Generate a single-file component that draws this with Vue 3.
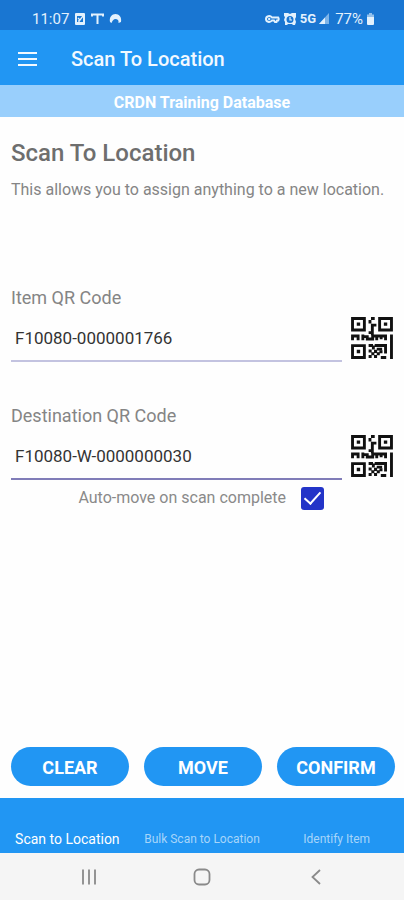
<script setup>
import { ref } from 'vue'

const itemCode = ref('F10080-0000001766')
const destinationCode = ref('F10080-W-0000000030')
const autoMove = ref(true)
const activeTab = ref('Scan to Location')
const tabs = ['Scan to Location', 'Bulk Scan to Location', 'Identify Item']

function clearCodes() {
  itemCode.value = ''
  destinationCode.value = ''
}
</script>

<template>
  <div class="screen">
    <svg class="defs" width="0" height="0" aria-hidden="true">
      <symbol id="qr" viewBox="0 0 124 124">
        <g fill="none" stroke="currentColor" stroke-width="8.5">
          <path d="M4.500 4.500h35v34h-35zM84.500 4.500h35v34h-35zM4.500 84.500h35v35h-35z" />
          <path d="M56 19V9M59 4.500h11M75 24H63v22H52M63 44v10" />
          <path d="M4.500 69V56H21v13M35 52v17M35 58h13v7h16v-9h8M76 69V56h26v13M89 56v10M119.500 52v72" />
          <path d="M52 84h13M70 84h32v24M66 84v12M76 95h16M88 119.500h16" />
        </g>
        <path fill="currentColor" d="M17 16h10v10H17zM97 16h10v10H97zM17 97h10v10H17zM52 96h9v9h-9zM60 104h9v9h-9zM52 112h9v9h-9zM68 97h9v9h-9zM76 104h9v9h-9zM68 112h9v9h-9zM84 98h9v9h-9z" />
      </symbol>
    </svg>

    <header>
      <div class="status">
        <div class="status-group">
          <span>11:07</span>
          <svg width="12" height="14" viewBox="0 0 12 14" aria-hidden="true">
            <path fill="currentColor" fill-rule="evenodd" d="M2 1h8q1 0 1 1v10q0 1-1 1H2q-1 0-1-1V2q0-1 1-1zM3 4v6h6V4z" />
            <path fill="none" stroke="currentColor" stroke-width="1.3" d="M4 6l2 2 3-4M4 9h2" />
          </svg>
          <svg width="13" height="14" viewBox="0 0 13 14" aria-hidden="true">
            <path fill="none" stroke="currentColor" stroke-width="2" d="M1 4.500V2.500h11v2M6.500 2.500V12" />
          </svg>
          <svg width="13" height="14" viewBox="0 0 13 14" aria-hidden="true">
            <path fill="currentColor" d="M1 10C0 5 3 2 6.500 2S13 5 12 10l-2.500 1C10 8 8.500 7 6.500 7S4 8 2.500 11z" />
          </svg>
        </div>
        <div class="status-group right">
          <svg width="15" height="14" viewBox="0 0 15 14" aria-hidden="true">
            <path fill="none" stroke="currentColor" stroke-width="2" d="M7 5.500C5 3 1 4 1 7s4 4 6 1.500h2l1 1.500h1.500l.5-1.500h1.200q1-1.500 0-3z" />
            <circle cx="4.200" cy="7" r="1.200" fill="currentColor" />
          </svg>
          <svg width="14" height="14" viewBox="0 0 14 14" aria-hidden="true">
            <path fill="currentColor" fill-rule="evenodd" d="M1 1h4l2 1 2-1h4v4l-1 2 1 3-1 3h-2l-1-1H5l-1 1H2v-3L1 8l1-3-1-1zM7 4a3.500 3.500 0 1 0 0 7 3.500 3.500 0 0 0 0-7z" />
            <path fill="none" stroke="currentColor" stroke-width="1.200" d="M7 5v3h2" />
          </svg>
          <span class="network">5G</span>
          <svg width="11" height="14" viewBox="0 0 11 14" aria-hidden="true">
            <path fill="currentColor" opacity=".5" d="M10 1v11H0z" />
            <path fill="currentColor" d="M6 5.500V12H0z" />
          </svg>
          <span class="battery">77%</span>
          <svg width="9" height="14" viewBox="0 0 9 14" aria-hidden="true">
            <path fill="currentColor" opacity=".6" d="M3 1h3v1.500h2V6H1V2.500h2z" />
            <path fill="currentColor" d="M1 5h7v7q0 1-1 1H2q-1 0-1-1z" />
          </svg>
        </div>
      </div>
      <div class="app-bar">
        <button class="menu" type="button" aria-label="Menu">
          <svg width="20" height="14" viewBox="0 0 20 14" aria-hidden="true">
            <path stroke="currentColor" stroke-width="2" d="M0 1h19M0 7h19M0 13h19" />
          </svg>
        </button>
        <span class="app-title">Scan To Location</span>
      </div>
      <div class="banner">CRDN Training Database</div>
    </header>

    <main>
      <h1>Scan To Location</h1>
      <p class="intro">This allows you to assign anything to a new location.</p>

      <div class="field">
        <label for="item">Item QR Code</label>
        <div class="entry">
          <input id="item" v-model="itemCode" class="code soft" type="text" />
          <button class="scan" type="button" aria-label="Scan item QR code">
            <svg width="42" height="42" aria-hidden="true"><use href="#qr" /></svg>
          </button>
        </div>
      </div>

      <div class="field">
        <label for="destination">Destination QR Code</label>
        <div class="entry">
          <input id="destination" v-model="destinationCode" class="code" type="text" />
          <button class="scan" type="button" aria-label="Scan destination QR code">
            <svg width="42" height="42" aria-hidden="true"><use href="#qr" /></svg>
          </button>
        </div>
      </div>

      <label class="auto">
        <span>Auto-move on scan complete</span>
        <input v-model="autoMove" type="checkbox" />
      </label>

      <div class="actions">
        <button type="button" @click="clearCodes">CLEAR</button>
        <button type="button">MOVE</button>
        <button type="button">CONFIRM</button>
      </div>
    </main>

    <nav class="tabs">
      <button
        v-for="tab in tabs"
        :key="tab"
        type="button"
        :class="{ active: tab === activeTab }"
        @click="activeTab = tab"
      >{{ tab }}</button>
    </nav>

    <div class="system">
      <button type="button" aria-label="Recent apps">
        <svg width="18" height="18" viewBox="0 0 18 18" aria-hidden="true">
          <path stroke="currentColor" stroke-width="1.800" d="M3 1.500v15M9 1.500v15M15 1.500v15" />
        </svg>
      </button>
      <button type="button" aria-label="Home">
        <svg width="18" height="18" viewBox="0 0 18 18" aria-hidden="true">
          <rect x="1.500" y="1.500" width="15" height="15" rx="4.500" fill="none" stroke="currentColor" stroke-width="1.800" />
        </svg>
      </button>
      <button type="button" aria-label="Back">
        <svg width="18" height="18" viewBox="0 0 18 18" aria-hidden="true">
          <path fill="none" stroke="currentColor" stroke-width="1.800" d="M14 2L6.500 9l7.500 7" />
        </svg>
      </button>
    </div>
  </div>
</template>

<style>
body {
  margin: 0;
  background: #fefefe;
}
</style>

<style scoped>
.screen {
  display: flex;
  flex-direction: column;
  min-height: 100vh;
  font-family: Roboto, "Liberation Sans", sans-serif;
  color: #757575;
}
.screen *,
.screen {
  box-sizing: border-box;
}
button,
input {
  margin: 0;
  padding: 0;
  border: 0;
  background: none;
  color: inherit;
  font: inherit;
}
svg {
  display: block;
  flex: none;
}
.defs {
  position: absolute;
}
.status {
  display: flex;
  justify-content: space-between;
  align-items: center;
  height: 30px;
  padding: 8px 29px 0 32px;
  background: #1976d2;
  color: #e3f1fd;
  font-size: 15px;
  line-height: 20px;
}
.status-group {
  display: flex;
  align-items: center;
  gap: 5px;
}
.status-group.right {
  gap: 3px;
}
.network {
  font-size: 13px;
  font-weight: 700;
}
.battery {
  margin-left: 2px;
}
.app-bar {
  display: flex;
  align-items: center;
  gap: 33px;
  height: 55px;
  padding: 2px 18px 0;
  background: #2196f3;
  color: #f2f9ff;
}
.app-title {
  font-size: 20px;
  font-weight: 500;
  line-height: 24px;
}
.banner {
  padding: 8px 0 4px;
  background: #99cffc;
  color: #fff;
  font-size: 16px;
  font-weight: 700;
  line-height: 20px;
  text-align: center;
}
main {
  display: flex;
  flex: 1;
  flex-direction: column;
  padding: 21px 11px 12px;
}
h1 {
  margin: 0;
  font-size: 24px;
  font-weight: 500;
  line-height: 30px;
  color: #6e6e6e;
}
.intro {
  margin: 12px 0 86px;
  font-size: 16px;
  line-height: 20px;
  color: #858585;
}
.field {
  padding-bottom: 42px;
}
.field label {
  display: block;
  font-size: 18px;
  line-height: 24px;
  color: #858585;
}
.entry {
  display: flex;
  align-items: flex-end;
  gap: 9px;
}
.code {
  flex: 1;
  min-width: 0;
  height: 52px;
  padding: 6px 4px 0;
  border-bottom: 2px solid #807cb8;
  border-radius: 0;
  outline: 0;
  color: #333;
  font-size: 17px;
}
.code.soft {
  border-bottom-color: #c3c3e0;
}
.scan {
  padding-bottom: 3px;
  color: #111;
}
.auto {
  display: flex;
  justify-content: flex-end;
  align-items: center;
  gap: 15px;
  margin-top: -36px;
  padding-right: 69px;
  font-size: 16px;
  line-height: 24px;
  color: #8a8a8a;
}
.auto input {
  display: grid;
  place-items: center;
  width: 23px;
  height: 23px;
  border-radius: 3px;
  background: #2334c8;
  appearance: none;
}
.auto input:not(:checked) {
  border: 2px solid #757575;
  background: none;
}
.auto input:checked::before {
  content: "";
  width: 7px;
  height: 14px;
  margin-bottom: 4px;
  border: solid #fff;
  border-width: 0 2px 2px 0;
  transform: rotate(42deg);
}
.actions {
  display: grid;
  grid-template-columns: repeat(3, 1fr);
  gap: 15px;
  margin-top: auto;
  margin-right: -2px;
}
.actions button {
  height: 39px;
  padding-top: 2px;
  border-radius: 20px;
  background: #2196f3;
  color: #fff;
  font-size: 18px;
  font-weight: 700;
}
.tabs {
  display: grid;
  grid-template-columns: repeat(3, 1fr);
  height: 55px;
  background: #2196f3;
  color: #a6d5fa;
  font-size: 12px;
}
.tabs button {
  align-self: end;
  padding-bottom: 4px;
  line-height: 20px;
  white-space: nowrap;
}
.tabs .active {
  color: #fff;
  font-size: 14px;
}
.system {
  display: flex;
  justify-content: center;
  align-items: center;
  gap: 95px;
  height: 47px;
  background: #f5f5f5;
  color: #8a8a8a;
}
</style>
